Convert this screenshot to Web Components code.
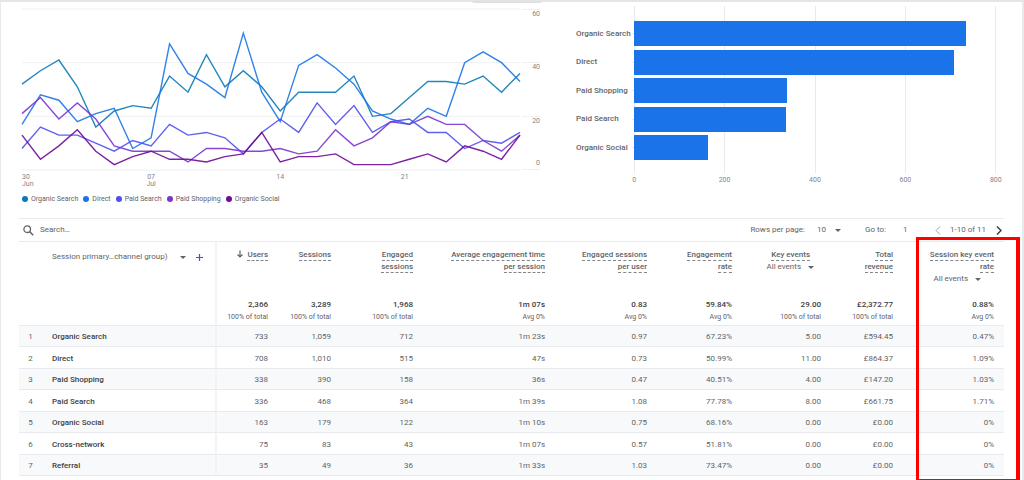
<!DOCTYPE html>
<html lang="en">
<head>
<meta charset="utf-8">
<title>Traffic acquisition</title>
<style>
  html, body { margin: 0; background: #fff; }
  body { font-family: Roboto, "Liberation Sans", sans-serif; font-size: 8px; line-height: 12px; color: #5f6368; }
</style>
</head>
<body>
<traffic-report></traffic-report>

<script>
const SERIES = [
  { name: 'Organic Search', color: '#0b7ab5', data: [32,37,41,31,16,22,24,23,35,29,43,31,37,31,22,29,29,29,35,20,21,27,33,33,32,35,29,36] },
  { name: 'Direct', color: '#1a73e8', data: [17,28,26,18,21,23,8,12,47,36,32,27,51,29,18,39,43,38,32,22,19,17,23,20,40,44,40,33] },
  { name: 'Paid Search', color: '#4f4ff0', data: [8,16,13,13,10,7,11,9,17,13,14,12,6,14,19,14,25,17,24,14,18,19,14,14,8,11,10,14] },
  { name: 'Paid Shopping', color: '#7a35d0', data: [21,27,19,25,19,9,7,7,7,3,8,8,7,7,8,6,7,15,9,12,18,17,20,17,17,11,7,13] },
  { name: 'Organic Social', color: '#6f0b96', data: [13,4,9,15,7,2,5,7,4,4,3,5,6,14,3,5,5,6,2,2,2,4,6,3,9,7,4,13] }
];

const BARS = [['Organic Search', 733], ['Direct', 708], ['Paid Shopping', 338], ['Paid Search', 336], ['Organic Social', 163]];

const COLUMNS = [
  { lines: ['Users'], width: 61, total: '2,366', note: '100% of total', sorted: true },
  { lines: ['Sessions'], width: 63, total: '3,289', note: '100% of total' },
  { lines: ['Engaged', 'sessions'], width: 82, total: '1,968', note: '100% of total' },
  { lines: ['Average engagement time', 'per session'], width: 132, total: '1m 07s', note: 'Avg 0%' },
  { lines: ['Engaged sessions', 'per user'], width: 102, total: '0.83', note: 'Avg 0%' },
  { lines: ['Engagement', 'rate'], width: 85, total: '59.84%', note: 'Avg 0%' },
  { lines: ['Key events'], width: 89, total: '29.00', note: '100% of total', menu: true, centered: true },
  { lines: ['Total', 'revenue'], width: 72, total: '£2,372.77', note: '100% of total' },
  { lines: ['Session key event', 'rate'], width: 101, total: '0.88%', note: 'Avg 0%', menu: true }
];

const ROWS = [
  ['Organic Search', '733', '1,059', '712', '1m 23s', '0.97', '67.23%', '5.00', '£594.45', '0.47%'],
  ['Direct', '708', '1,010', '515', '47s', '0.73', '50.99%', '11.00', '£864.37', '1.09%'],
  ['Paid Shopping', '338', '390', '158', '36s', '0.47', '40.51%', '4.00', '£147.20', '1.03%'],
  ['Paid Search', '336', '468', '364', '1m 39s', '1.08', '77.78%', '8.00', '£661.75', '1.71%'],
  ['Organic Social', '163', '179', '122', '1m 10s', '0.75', '68.16%', '0.00', '£0.00', '0%'],
  ['Cross-network', '75', '83', '43', '1m 07s', '0.57', '51.81%', '0.00', '£0.00', '0%'],
  ['Referral', '35', '49', '36', '1m 33s', '1.03', '73.47%', '0.00', '£0.00', '0%']
];

const CARET = '<svg class="caret" width="6" height="3" viewBox="0 0 6 3" aria-hidden="true"><path d="M0 0h6L3 3z" fill="#5f6368"/></svg>';
const RESET = `
  * { box-sizing: border-box; }
  button, input, select { font: inherit; color: inherit; background: none; border: 0; padding: 0; margin: 0; appearance: none; outline: 0; }
  svg { display: block; flex: none; }
`;

class BaseElement extends HTMLElement {
  connectedCallback() {
    if (this.shadowRoot) return;
    this.attachShadow({ mode: 'open' }).innerHTML = `<style>${RESET}${this.styles()}</style>${this.markup()}`;
  }
}

customElements.define('line-chart', class extends BaseElement {
  styles() { return `
    :host { display: block; padding-top: 8px; font-size: 7px; line-height: 7px; color: #80868b; }
    .chart { display: grid; grid-template-columns: 1fr 18px; column-gap: 2px; }
    .plot { width: 100%; height: 161px; overflow: visible; }
    .plot path { fill: none; vector-effect: non-scaling-stroke; }
    .y { display: grid; grid-template-rows: 53px 54px 53px 1px; text-align: right; }
    .y div { border-top: 1px solid #eeeff0; padding-top: 1px; }
    .y .last { display: flex; justify-content: space-between; flex-direction: column; padding-bottom: 2px; }
    .y span { display: block; }
    .x { display: grid; grid-template-columns: 7fr 14fr 14fr 13fr 6fr; padding-top: 4px; text-align: center; }
    .x :first-child { text-align: left; }
    .legend { display: flex; gap: 5px; list-style: none; margin: 7px 0 0; padding: 0; color: #5f6368; line-height: 8px; }
    .legend li { display: flex; align-items: center; gap: 3px; white-space: nowrap; }
    .dot { width: 6px; height: 6px; border-radius: 50%; }
  `; }
  markup() {
    const y = v => 480 - v * 8;
    const grid = [0, 20, 40, 60].map(v => `<path d="M0 ${y(v)}H27" stroke="#eeeff0"/>`).join('');
    const lines = SERIES.map(s => `<path d="M${s.data.map((v, i) => `${i} ${y(v)}`).join('L')}" stroke="${s.color}" stroke-width="1.4" stroke-opacity=".9"/>`).join('');
    return `
      <div class="chart">
        <svg class="plot" viewBox="0 0 27 480" preserveAspectRatio="none" role="img" aria-label="Users by channel over time">${grid}${lines}</svg>
        <div class="y"><div>60</div><div>40</div><div class="last"><span>20</span><span>0</span></div><div></div></div>
        <div class="x"><span>30<br>Jun</span><span>07<br>Jul</span><span>14</span><span>21</span></div>
      </div>
      <ul class="legend">${SERIES.map(s => `<li><span class="dot" style="background:${s.color}"></span>${s.name}</li>`).join('')}</ul>`;
  }
});

customElements.define('bar-chart', class extends BaseElement {
  styles() { return `
    :host { display: block; padding-top: 5px; font-size: 7px; line-height: 8px; }
    .chart { display: grid; grid-template: 167px auto / 58px 1fr; }
    .grid { grid-area: 1 / 2; display: grid; grid-template-columns: repeat(4, 1fr); border-right: 1px solid #e8eaed; }
    .grid i { border-left: 1px solid #e8eaed; }
    .bars { grid-area: 1 / 1 / 2 / 3; display: flex; flex-direction: column; justify-content: space-between; padding: 15px 0 13px; }
    .row { display: grid; grid-template-columns: 58px 1fr; align-items: center; font-size: 8px; font-weight: 500; color: #5f6368; }
    .label { display: flex; align-items: center; justify-content: space-between; white-space: nowrap; }
    .label::after { content: ""; width: 2px; height: 1px; background: #e8eaed; }
    .bar { height: 25px; background: #1a73e8; }
    .axis { grid-column: 1 / 3; display: grid; grid-template-columns: 13px repeat(5, 90fr); margin-right: -45px; padding-top: 3px; text-align: center; color: #80868b; }
  `; }
  markup() { return `
    <div class="chart">
      <div class="grid"><i></i><i></i><i></i><i></i></div>
      <div class="bars">${BARS.map(([n, v]) => `<div class="row"><span class="label">${n}</span><div class="bar" style="width:${v / 8}%"></div></div>`).join('')}</div>
      <div class="axis"><i></i><span>0</span><span>200</span><span>400</span><span>600</span><span>800</span></div>
    </div>`; }
});

customElements.define('table-toolbar', class extends BaseElement {
  styles() { return `
    :host { display: flex; align-items: center; height: 24px; border: solid #e8eaed; border-width: 1px 0; padding: 0 2px 0 4px; }
    .search { display: flex; align-items: center; gap: 6px; flex: 1; }
    .search input { flex: 1; }
    input::placeholder { color: #5f6368; opacity: 1; }
    .pager { display: flex; align-items: center; }
    .rows { display: flex; align-items: center; margin-right: 24px; }
    select { width: 10px; margin: 0 8px 0 12px; overflow: visible; }
    .goto input { width: 8px; margin-left: 17px; }
    .goto { margin-right: 24px; }
    .range { margin: 0 10px 0 9px; }
    button { display: flex; }
  `; }
  markup() { return `
    <label class="search">
      <svg width="11" height="11" viewBox="0 0 11 11" fill="none" stroke="#5f6368" aria-hidden="true"><circle cx="4.2" cy="4.2" r="3.3" stroke-width="1.3"/><path d="M6.8 6.8l3.4 3.4" stroke-width="1.6"/></svg>
      <input type="text" placeholder="Search…" aria-label="Search">
    </label>
    <div class="pager">
      <label class="rows">Rows per page:<select><option>10</option></select>${CARET}</label>
      <label class="goto">Go to:<input type="text" value="1"></label>
      <button aria-label="Previous page"><svg width="6" height="9" viewBox="0 0 6 9" fill="none" stroke="#9aa0a6" stroke-width="1"><path d="M5 .5l-4 4 4 4"/></svg></button>
      <span class="range">1-10 of 11</span>
      <button aria-label="Next page"><svg width="6" height="9" viewBox="0 0 6 9" fill="none" stroke="#3c4043" stroke-width="1.5"><path d="M1 .5l4 4-4 4"/></svg></button>
    </div>`; }
});

customElements.define('data-table', class extends BaseElement {
  styles() { return `
    :host { display: block; }
    table { width: 100%; table-layout: fixed; border-collapse: separate; border-spacing: 0; }
    th, td { padding: 0 10px 0 0; text-align: right; white-space: nowrap; font-weight: 400; }
    .dimension { border-right: 2px solid #f1f3f4; }
    thead th { height: 52px; padding-top: 7px; vertical-align: top; font-weight: 500; }
    thead .dimension { text-align: left; padding: 9px 0 0 33px; font-weight: 400; }
    .line { display: block; }
    .line span { border-bottom: 1px dashed #80868b; padding-bottom: 1px; }
    .sort { display: inline-block; vertical-align: -1px; margin-right: 4px; }
    .centered .line { padding-right: 11px; }
    button { display: inline-flex; align-items: center; gap: 7px; line-height: 12px; vertical-align: top; font-weight: 400; }
    .menu { margin-right: 13px; }
    .centered .menu { margin-right: 7px; }
    .group { gap: 12px; }
    .add { margin-left: 10px; height: 12px; }
    .totals td { height: 32px; padding-top: 5px; vertical-align: top; border-bottom: 1px solid #e8eaed; font-size: 7px; }
    .totals strong { display: block; font-size: 8px; font-weight: 500; color: #3c4043; }
    tbody tr { height: 21px; }
    tbody tr:nth-child(even) { height: 22px; }
    tbody tr:nth-child(odd) { background: #f8f9fa; }
    tbody td, tbody th { padding-top: 2px; border-bottom: 1px solid #e8eaed; }
    tbody .index { text-align: center; }
    tbody .dimension { text-align: left; font-weight: 500; color: #3c4043; }
  `; }
  markup() {
    const heads = COLUMNS.map(c => `<th scope="col"${c.centered ? ' class="centered"' : ''}>${c.lines.map(l =>
      `<span class="line">${c.sorted ? '<svg class="sort" width="6" height="8" viewBox="0 0 6 8" fill="none" stroke="#5f6368" stroke-width="1.2" aria-hidden="true"><path d="M3 .5v6.5M.5 4.5L3 7l2.5-2.5"/></svg>' : ''}<span>${l}</span></span>`).join('')}${c.menu ? `<button class="menu">All events${CARET}</button>` : ''}</th>`).join('');
    const totals = COLUMNS.map(c => `<td><strong>${c.total}</strong>${c.note}</td>`).join('');
    const rows = ROWS.map(([name, ...cells], i) =>
      `<tr><td class="index">${i + 1}</td><th scope="row" class="dimension">${name}</th>${cells.map(v => `<td>${v}</td>`).join('')}</tr>`).join('');
    return `<table>
      <colgroup><col style="width:33px"><col style="width:165px">${COLUMNS.map(c => `<col style="width:${c.width}px">`).join('')}</colgroup>
      <thead>
        <tr><th scope="col" colspan="2" class="dimension"><button class="group">Session primary…channel group)${CARET}</button><button class="add" aria-label="Add dimension"><svg width="7" height="7" viewBox="0 0 7 7" stroke="#1a66d8" stroke-width="1.2"><path d="M3.5 0v7M0 3.5h7"/></svg></button></th>${heads}</tr>
        <tr class="totals"><td colspan="2" class="dimension"></td>${totals}</tr>
      </thead>
      <tbody>${rows}</tbody>
    </table>`;
  }
});

customElements.define('highlight-frame', class extends BaseElement {
  styles() { return `
    :host { display: block; position: relative; }
    .frame { position: absolute; top: 19px; bottom: 0; right: -16px; width: 104px; border: 4px solid #fe0000; border-width: 3px 4px 1px 3px; pointer-events: none; }
  `; }
  markup() { return `<slot></slot><div class="frame"></div>`; }
});

customElements.define('traffic-report', class extends BaseElement {
  styles() { return `
    :host { display: block; position: relative; border: solid #e8eaed; border-width: 1px 2px 0 1px; padding: 0 18px 0 18px; }
    :host::before { content: ""; position: absolute; top: -1px; left: -1px; right: -2px; height: 2px; background: #e4e5e6; }
    .tab { position: absolute; top: 0; right: 47%; width: 70px; height: 2px; border-radius: 0 0 3px 3px; background: #e0e0e0; }
    .charts { display: grid; grid-template-columns: 518fr 420fr; column-gap: 36px; height: 217px; padding: 0 8px 0 3px; }
    highlight-frame { padding-bottom: 4px; }
  `; }
  markup() { return `
    <div class="tab"></div>
    <div class="charts"><line-chart></line-chart><bar-chart></bar-chart></div>
    <highlight-frame><table-toolbar></table-toolbar><data-table></data-table></highlight-frame>`; }
});
</script>
</body>
</html>
